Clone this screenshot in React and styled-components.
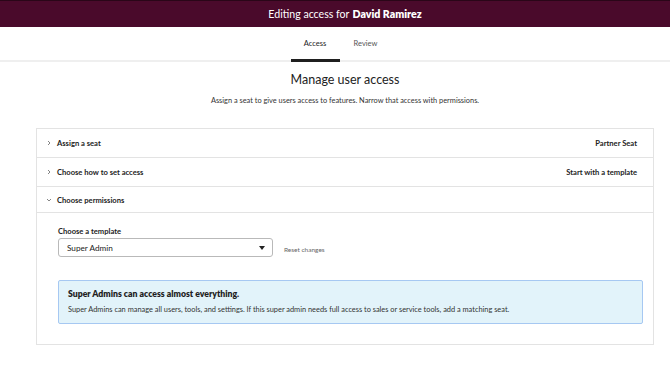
import React from "react";
import styled, { createGlobalStyle } from "styled-components";

const GlobalStyle = createGlobalStyle`
  body {
    margin: 0;
    font-family: "Lato", "Noto Sans", sans-serif;
    color: #1f1f1f;
    background: #fff;
  }
`;

const Header = styled.header`
  height: 27px;
  background: #4a0a2b;
  border-top: 1px solid #2a0618;
  box-sizing: border-box;
  display: flex;
  align-items: center;
  justify-content: center;
  padding-left: 20px;
  color: #fff;
  font-size: 10.6px;

  & b {
    font-weight: 800;
    margin-left: 3px;
  }
`;

const Tabs = styled.nav`
  height: 35px;
  display: flex;
  justify-content: center;
  align-items: stretch;
  border-bottom: 2px solid #efefef;
  box-sizing: border-box;
  padding-left: 12px;
`;

const Tab = styled.div`
  width: ${(p) => (p.$active ? "49px" : "52px")};
  display: flex;
  align-items: center;
  justify-content: center;
  font-size: 7.5px;
  color: ${(p) => (p.$active ? "#222" : "#555")};
  border-bottom: 3px solid ${(p) => (p.$active ? "#1f1f1f" : "transparent")};
  margin-bottom: -2px;
  padding-top: 1px;
`;

const Main = styled.main`
  padding: 0 16px 0 36px;
`;

const Title = styled.h1`
  margin: 10px 0 0;
  text-align: center;
  font-size: 12.5px;
  font-weight: 400;
  color: #222;
`;

const Sub = styled.p`
  margin: 9px 0 0;
  text-align: center;
  font-size: 7.4px;
  color: #333;
`;

const Card = styled.section`
  margin-top: 23px;
  border: 1px solid #e3e3e3;
`;

const Row = styled.div`
  height: ${(p) => p.$h}px;
  box-sizing: border-box;
  display: flex;
  align-items: center;
  padding: 0 16px 0 8px;
  border-bottom: 1px solid #e3e3e3;
  font-size: 7.6px;
  font-weight: 700;
  color: #222;
`;

const Chevron = styled.span`
  width: 11px;
  display: flex;
  align-items: center;
  padding-left: 1px;
`;

const RowLabel = styled.span`
  flex: 1;
`;

const Body = styled.div`
  padding: 13px 10px 20px 21px;
`;

const FieldLabel = styled.label`
  display: block;
  font-size: 7.6px;
  font-weight: 700;
  color: #222;
`;

const FieldRow = styled.div`
  display: flex;
  align-items: center;
  gap: 11px;
  margin-top: 2px;
`;

const Select = styled.div`
  width: 215px;
  height: 19px;
  box-sizing: border-box;
  border: 1px solid #b9b9b9;
  border-radius: 3px;
  display: flex;
  align-items: center;
  justify-content: space-between;
  padding: 0 7px 0 8px;
  font-size: 8.2px;
  color: #222;
`;

const Caret = styled.span`
  width: 0;
  height: 0;
  border-left: 3px solid transparent;
  border-right: 3px solid transparent;
  border-top: 4px solid #222;
`;

const Reset = styled.span`
  font-size: 6.5px;
  color: #666;
  margin-top: 3px;
`;

const Alert = styled.div`
  margin-top: 23px;
  border: 1.5px solid #a6c8f2;
  border-radius: 2px;
  background: #e2f3fa;
  padding: 7px 9px 9px;
`;

const AlertTitle = styled.div`
  font-size: 8.7px;
  font-weight: 800;
  color: #1f1f1f;
`;

const AlertText = styled.div`
  margin-top: 6px;
  font-size: 7.4px;
  color: #333;
`;

function Chev({ open }) {
  return (
    <svg width="6" height="6" viewBox="0 0 6 6">
      <path
        d={open ? "M1 2 L3 4 L5 2" : "M2 1 L4 3 L2 5"}
        fill="none"
        stroke="#666"
        strokeWidth="0.8"
      />
    </svg>
  );
}

export default function App() {
  return (
    <>
      <GlobalStyle />
      <Header>
        Editing access for <b>David Ramirez</b>
      </Header>
      <Tabs>
        <Tab $active>Access</Tab>
        <Tab>Review</Tab>
      </Tabs>
      <Main>
        <Title>Manage user access</Title>
        <Sub>Assign a seat to give users access to features. Narrow that access with permissions.</Sub>
        <Card>
          <Row $h={29}>
            <Chevron>
              <Chev />
            </Chevron>
            <RowLabel>Assign a seat</RowLabel>
            <span>Partner Seat</span>
          </Row>
          <Row $h={29}>
            <Chevron>
              <Chev />
            </Chevron>
            <RowLabel>Choose how to set access</RowLabel>
            <span>Start with a template</span>
          </Row>
          <Row $h={26}>
            <Chevron>
              <Chev open />
            </Chevron>
            <RowLabel>Choose permissions</RowLabel>
          </Row>
          <Body>
            <FieldLabel>Choose a template</FieldLabel>
            <FieldRow>
              <Select>
                Super Admin
                <Caret />
              </Select>
              <Reset>Reset changes</Reset>
            </FieldRow>
            <Alert>
              <AlertTitle>Super Admins can access almost everything.</AlertTitle>
              <AlertText>
                Super Admins can manage all users, tools, and settings. If this super admin needs full access to sales
                or service tools, add a matching seat.
              </AlertText>
            </Alert>
          </Body>
        </Card>
      </Main>
    </>
  );
}
